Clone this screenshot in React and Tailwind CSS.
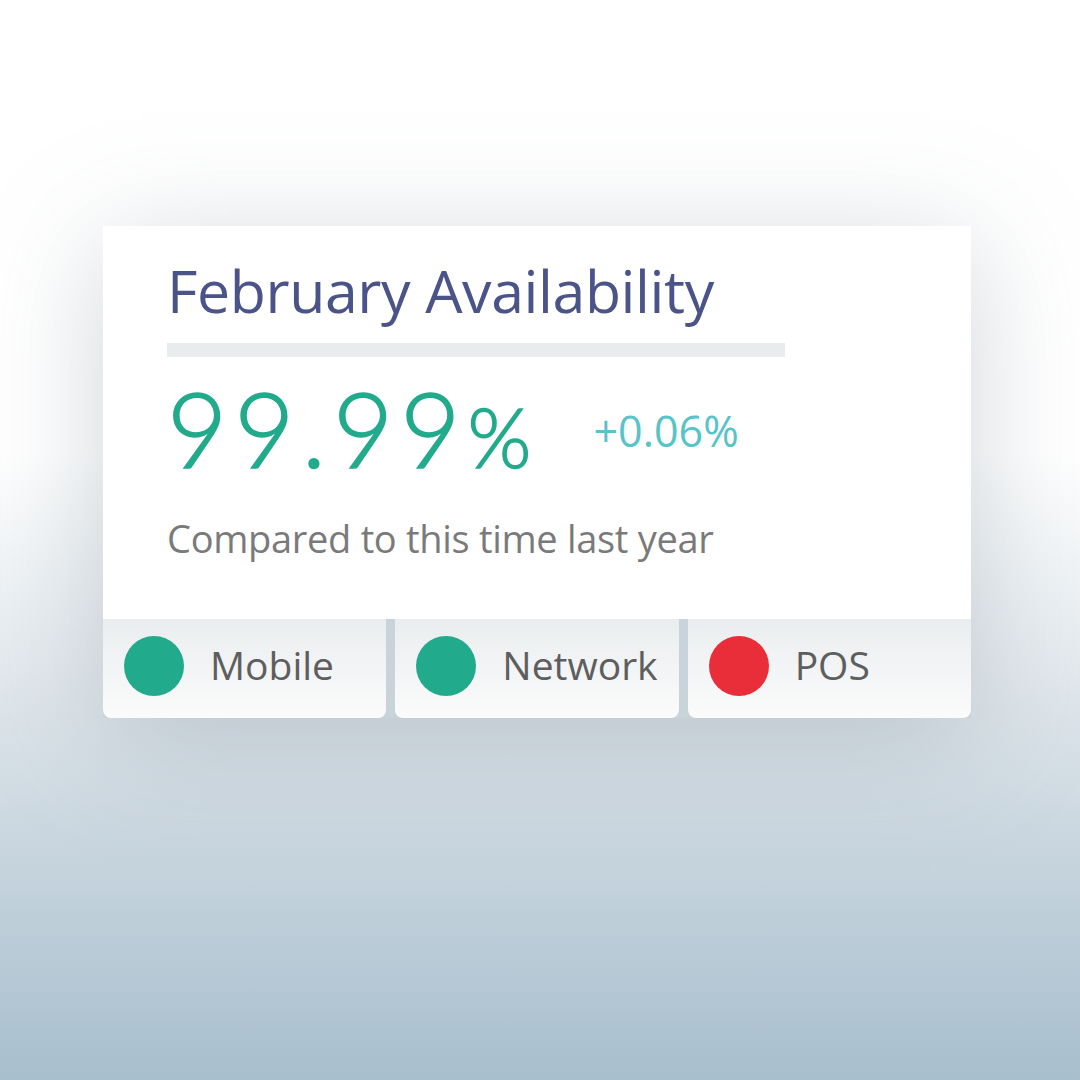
const systems = [
  { name: 'Mobile', ok: true },
  { name: 'Network', ok: true },
  { name: 'POS', ok: false },
]

export default function App() {
  return (
    <div className="min-h-[1080px] w-full bg-[linear-gradient(to_bottom,#ffffff_0%,#ffffff_42%,#e3e9ed_62%,#c9d6df_78%,#a7becd_100%)] pt-[226px] pl-[103px] font-['Open_Sans',sans-serif]">
      <div className="w-[868px] shadow-[0_20px_110px_rgba(120,135,150,0.35)]">
        {/* Main panel */}
        <div className="bg-white pl-[64px] pt-[24px] pb-[57px]">
          <h1 className="text-[59px] leading-[80px] text-[#4a5489] tracking-[-0.4px]">February Availability</h1>
          <div className="mt-[13px] h-[14px] w-[618px] bg-[#e9ecec]" />
          <div className="mt-[16px] flex h-[110px] items-center">
            <span className="flex items-baseline font-['Lato',sans-serif] font-light text-[#22aa8c] [-webkit-text-stroke:1.5px_#22aa8c]">
              <span className="text-[104px] leading-[110px] tracking-[7px]">99.99</span>
              <span className="text-[82px] leading-none">%</span>
            </span>
            <span className="ml-[62px] mt-[6px] text-[43px] text-[#58c3c8]">+0.06%</span>
          </div>
          <p className="mt-[31px] text-[38px] leading-[48px] text-[#7a7a7a] tracking-[-0.3px]">Compared to this time last year</p>
        </div>
        {/* Status tabs */}
        <div className="flex gap-[9px] bg-[#c9d3da]">
          {systems.map((s) => (
            <div
              key={s.name}
              className="flex h-[99px] flex-1 items-center rounded-b-[8px] bg-[linear-gradient(to_bottom,#eaedef,#fbfbfb)] pl-[21px] pb-[6px]"
            >
              <span className={`h-[60px] w-[60px] rounded-full ${s.ok ? 'bg-[#21aa8c]' : 'bg-[#e92d39]'}`} />
              <span className="ml-[26px] text-[39px] text-[#5e5e5e]">{s.name}</span>
            </div>
          ))}
        </div>
      </div>
    </div>
  )
}
